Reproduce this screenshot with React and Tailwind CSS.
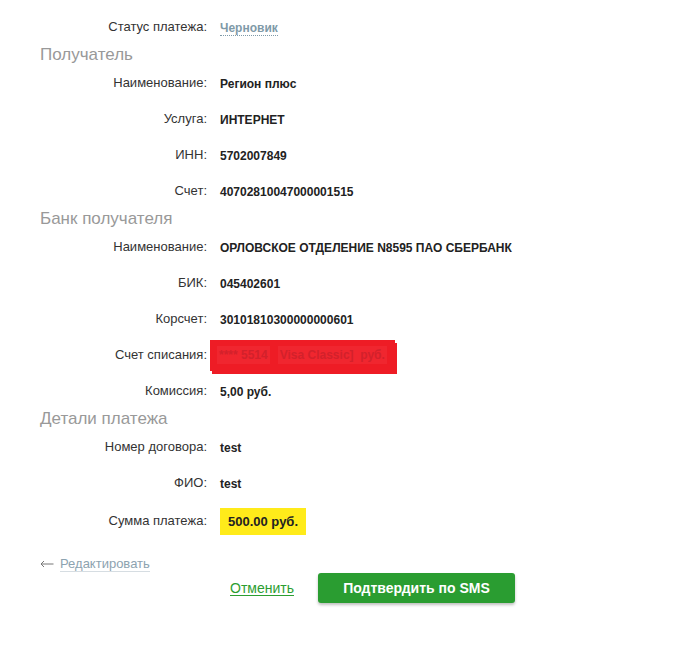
import React from 'react'

const sections = [
  {
    title: 'Получатель',
    rows: [
      ['Наименование', 'Регион плюс'],
      ['Услуга', 'ИНТЕРНЕТ'],
      ['ИНН', '5702007849'],
      ['Счет', '40702810047000001515'],
    ],
  },
  {
    title: 'Банк получателя',
    rows: [
      ['Наименование', 'ОРЛОВСКОЕ ОТДЕЛЕНИЕ N8595 ПАО СБЕРБАНК'],
      ['БИК', '045402601'],
      ['Корсчет', '30101810300000000601'],
      ['Счет списания', null],
      ['Комиссия', '5,00 руб.'],
    ],
  },
  {
    title: 'Детали платежа',
    rows: [
      ['Номер договора', 'test'],
      ['ФИО', 'test'],
    ],
  },
]

function Row({ label, children, tall }) {
  return (
    <div className={`flex items-center ${tall ? 'h-[40px]' : 'h-[36px]'}`}>
      <div className="w-[167px] text-right text-[13px] text-[#333]">{label}:</div>
      <div className="ml-[13px]">{children}</div>
    </div>
  )
}

function Redacted() {
  return (
    <div className="-ml-[10px] flex h-[31px] w-[185px] items-center bg-[#ee1c25] pl-[7px] text-[12px] font-bold text-[#d3212b] shadow-[2px_3px_0_#ee1c25]">
      <span className="bg-[#f0262f] px-[2px]">**** 5514</span>
      <span className="ml-[8px] bg-[#f0262f] px-[2px]">Visa Classic]&nbsp; руб.</span>
    </div>
  )
}

export default function App() {
  return (
    <div className="min-h-[645px] bg-white pt-[9px] pl-[40px] font-['Liberation_Sans',Arial,sans-serif]">
      <Row label="Статус платежа">
        <span className="border-b border-dotted border-[#7f9aa8] text-[12px] font-bold text-[#7f9aa8]">
          Черновик
        </span>
      </Row>

      {sections.map((s) => (
        <div key={s.title}>
          <div className="flex h-[20px] items-center text-[17px] text-[#999]">{s.title}</div>
          {s.rows.map(([label, value]) => (
            <Row key={label + s.title} label={label}>
              {value === null ? (
                <Redacted />
              ) : (
                <span className="text-[12px] font-bold text-[#222]">{value}</span>
              )}
            </Row>
          ))}
        </div>
      ))}

      <Row label="Сумма платежа" tall>
        <span className="block bg-[#ffeb1a] px-[8px] py-[6px] text-[13px] font-bold leading-[15px] text-[#222]">
          500.00 руб.
        </span>
      </Row>

      <div className="mt-[14px] flex h-[18px] items-center text-[13px] text-[#8da3b0]">
        <svg width="14" height="8" viewBox="0 0 14 8" className="mr-[6px]">
          <path d="M13.5 4H1 M4 1L1 4L4 7" stroke="#777" strokeWidth="1" fill="none" />
        </svg>
        <span className="border-b border-[#d6dde2] leading-[14px]">Редактировать</span>
      </div>

      <div className="flex items-center pl-[190px]">
        <span className="text-[14px] text-[#2c9e31] underline underline-offset-2">Отменить</span>
        <button className="ml-[24px] h-[30px] w-[197px] rounded-[3px] bg-[#2a9d31] text-[14px] font-bold text-white shadow-[0_2px_3px_rgba(0,0,0,0.25)]">
          Подтвердить по SMS
        </button>
      </div>
    </div>
  )
}
